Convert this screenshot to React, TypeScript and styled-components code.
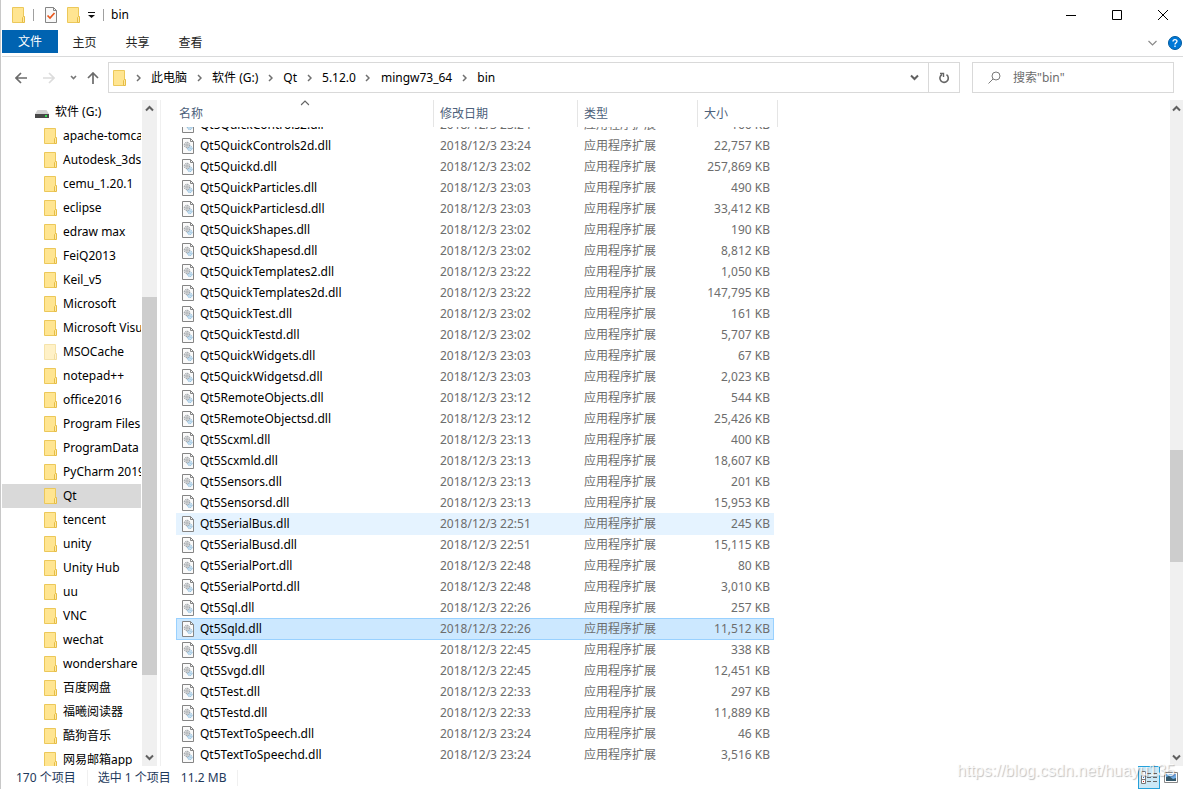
import React from "react";
import styled, { createGlobalStyle } from "styled-components";

const Global = createGlobalStyle`
  * { box-sizing: border-box; }
  html, body { margin: 0; background: #fff; overflow: hidden; }
  body, button, input {
    font-family: "Noto Sans", "Noto Sans CJK SC", sans-serif;
    font-size: 12px;
    line-height: 16px;
  }
  button { border: 0; padding: 0; background: none; color: inherit; display: flex; align-items: center; }
  svg { display: block; flex: none; }
`;

const Window = styled.div`
  position: relative;
  display: flex;
  flex-direction: column;
  height: 100vh;
  padding-left: 1px;
  border-left: 1px solid #c8c8c8;
  color: #000;
`;
const TitleBar = styled.header`
  display: flex;
  align-items: center;
  height: 30px;
  padding-left: 10px;
`;
const QuickAccess = styled.div`
  display: flex;
  align-items: center;
`;
const Divider = styled.span<{ $gap: number }>`
  width: 1px;
  height: 12px;
  margin: 0 ${(p) => p.$gap}px 0 8px;
  background: #a0a0a0;
`;
const QuickButton = styled.button<{ $gap: number }>`
  margin-right: ${(p) => p.$gap}px;
`;
const WindowControls = styled.div`
  display: flex;
  gap: 36px;
  margin-left: auto;
  padding-right: 15px;
`;
const ControlButton = styled.button`
  justify-content: center;
  width: 10px;
  height: 28px;
`;
const Ribbon = styled.nav`
  display: flex;
  align-items: center;
  height: 27px;
  padding-bottom: 3px;
  border-bottom: 1px solid #d9dadb;
`;
const Tab = styled.button<{ $primary?: boolean }>`
  justify-content: center;
  width: ${(p) => (p.$primary ? 56 : 53)}px;
  height: 23px;
  padding-top: ${(p) => (p.$primary ? 0 : 2)}px;
  color: ${(p) => (p.$primary ? "#fff" : "#222")};
  background: ${(p) => (p.$primary ? "#0063b1" : "transparent")};
`;
const RibbonEnd = styled.div`
  display: flex;
  align-items: center;
  gap: 11px;
  margin-left: auto;
  padding: 2px 1px 0 0;
`;
const AddressRow = styled.div`
  display: flex;
  align-items: center;
  height: 43px;
  padding: 0 9px 2px 12px;
`;
const NavButtons = styled.div`
  display: flex;
  align-items: center;
  width: 94px;
`;
const NavButton = styled.button<{ $w: number }>`
  justify-content: center;
  width: ${(p) => p.$w}px;
  height: 24px;
`;
const AddressBox = styled.div`
  display: flex;
  flex: 1;
  align-items: center;
  height: 31px;
  margin-right: 12px;
  padding-left: 4px;
  border: 1px solid #d9d9d9;
`;
const Crumbs = styled.ol`
  display: flex;
  flex: 1;
  align-items: center;
  margin: 0;
  padding: 0;
  list-style: none;
`;
const Crumb = styled.li`
  display: flex;
  align-items: center;
`;
const CrumbSep = styled.span`
  display: flex;
  justify-content: center;
  width: 25px;
  padding-right: 1px;
`;
const CrumbLink = styled.a`
  color: #000;
  text-decoration: none;
`;
const BoxButton = styled.button<{ $divided?: boolean }>`
  justify-content: center;
  width: ${(p) => (p.$divided ? 31 : 28)}px;
  height: 29px;
  border-left: ${(p) => (p.$divided ? "1px solid #d9d9d9" : "0")};
`;
const SearchBox = styled.label`
  display: flex;
  align-items: center;
  gap: 12px;
  width: 202px;
  height: 31px;
  padding-left: 15px;
  border: 1px solid #d9d9d9;
`;
const SearchInput = styled.input`
  flex: 1;
  min-width: 0;
  padding: 0;
  border: 0;
  outline: 0;
  &::placeholder { color: #6d6d6d; opacity: 1; }
`;
const Body = styled.div`
  display: flex;
  flex: 1;
  min-height: 0;
`;
const TreePane = styled.aside`
  display: flex;
  width: 159px;
  border-right: 1px solid #f0f0f0;
`;
const Tree = styled.ul`
  width: 139px;
  margin: 0 1px 0 0;
  padding: 0;
  overflow: hidden;
  list-style: none;
`;
const TreeItem = styled.li<{ $root?: boolean; $selected?: boolean }>`
  display: flex;
  align-items: center;
  gap: 6px;
  height: 24px;
  padding-left: ${(p) => (p.$root ? 33 : 42)}px;
  white-space: nowrap;
  background: ${(p) => (p.$selected ? "#d9d9d9" : "transparent")};
`;
const Scroll = styled.div<{ $w: number }>`
  display: flex;
  flex: none;
  flex-direction: column;
  width: ${(p) => p.$w}px;
  background: #f0f0f0;
`;
const ScrollButton = styled.button`
  justify-content: center;
  height: 17px;
`;
const Track = styled.div<{ $size: number }>`
  flex: ${(p) => p.$size} 1 0;
`;
const Thumb = styled.div<{ $size: number }>`
  flex: ${(p) => p.$size} 1 0;
  background: #cdcdcd;
`;
const Main = styled.main`
  display: flex;
  flex: 1;
  min-width: 0;
`;
const Table = styled.table`
  display: flex;
  flex: 1;
  flex-direction: column;
  min-width: 0;
  padding-left: 15px;
`;
const Head = styled.thead`
  display: block;
  flex: none;
`;
const HeadRow = styled.tr`
  display: grid;
  grid-template-columns: 258px 144px 120px 80px;
`;
const HeadCell = styled.th<{ $first?: boolean }>`
  position: relative;
  height: 27px;
  padding: 6px 0 0 ${(p) => (p.$first ? 3 : 6)}px;
  border-right: 1px solid #e5e5e5;
  color: #4c607a;
  font-weight: 400;
  text-align: left;
`;
const SortMark = styled.span`
  position: absolute;
  top: 0;
  left: 50%;
  transform: translateX(-50%);
`;
const Rows = styled.tbody`
  display: flex;
  flex: 1;
  flex-direction: column;
  justify-content: flex-end;
  min-height: 0;
  overflow: hidden;
`;
const Row = styled.tr<{ $state?: string }>`
  display: grid;
  flex: none;
  grid-template-columns: 258px 144px 100px 88px;
  align-items: center;
  width: 598px;
  height: 22px;
  padding-left: 5px;
  border: 1px solid ${(p) => (p.$state === "selected" ? "#99d1ff" : "transparent")};
  background: ${(p) => (p.$state === "selected" ? "#cce8ff" : "transparent")};
  ${(p) => (p.$state === "hover" ? "background: #e5f3ff; border-color: #e5f3ff;" : "")}
  & + & { margin-top: -1px; }
`;
const Cell = styled.td<{ $right?: boolean }>`
  padding: 0 ${(p) => (p.$right ? 2 : 0)}px 0 0;
  color: #6d6d6d;
  text-align: ${(p) => (p.$right ? "right" : "left")};
  white-space: nowrap;
`;
const NameCell = styled(Cell)`
  display: flex;
  align-items: center;
  gap: 6px;
  color: #000;
`;
const StatusBar = styled.footer`
  display: flex;
  align-items: center;
  height: 23px;
  padding: 0 3px 0 14px;
  color: #1e395b;
`;
const StatusText = styled.span<{ $divided?: boolean }>`
  margin-right: 10px;
  padding-right: ${(p) => (p.$divided ? 11 : 0)}px;
  border-right: ${(p) => (p.$divided ? "1px solid #f0f0f0" : "0")};
`;
const Views = styled.div`
  display: flex;
  gap: 2px;
  margin-left: auto;
`;
const ViewButton = styled.button<{ $active?: boolean }>`
  justify-content: center;
  width: ${(p) => (p.$active ? 22 : 18)}px;
  height: 23px;
  border: ${(p) => (p.$active ? "1px solid #26a0da" : "0")};
  background: ${(p) => (p.$active ? "#cbe8f6" : "transparent")};
`;
const Watermark = styled.span`
  position: absolute;
  right: 8px;
  bottom: 9px;
  color: rgba(255, 255, 255, 0.8);
  font: 16px/18px "Liberation Sans", sans-serif;
  text-shadow: 1px 1px 1px rgba(0, 0, 0, 0.25);
  pointer-events: none;
`;

const Folder = ({ faded }: { faded?: boolean }) => (
  <svg width="13" height="16" viewBox="0 0 13 16" opacity={faded ? 0.5 : 1}>
    <path d="M.5 .5H11.5V15.5H.5Z" fill="#ffe591" stroke="#ecc85a" />
    <path d="M10.5 10.5L11.5 9.500H12.500V15.500H10.500Z" fill="#ffe9a6" stroke="#e6bd45" />
  </svg>
);
const Drive = () => (
  <svg width="14" height="14" viewBox="0 0 14 14">
    <path d="M2.500 5H11.500L14 9H0Z" fill="#d2d2d2" />
    <path d="M0 9H14V13H0Z" fill="#484848" />
    <path d="M10 10H12V12H10Z" fill="#35e052" />
  </svg>
);
const DllFile = () => (
  <svg width="12" height="16" viewBox="0 0 12 16">
    <path d="M.5 .5H8.500L11.500 3.500V15.500H.5Z" fill="#fafafa" stroke="#858585" />
    <path d="M8.500 .5V3.500H11.500" fill="none" stroke="#858585" />
    <circle cx="7.800" cy="10.300" r="2.300" fill="#d6ebf8" stroke="#7fb0d4" strokeDasharray="1.200 .6" />
    <circle cx="5" cy="7" r="2.700" fill="#f2f2f2" stroke="#858b91" strokeDasharray="1.400 .6" />
    <circle cx="5" cy="7" r="1.200" fill="#fff" stroke="#858b91" strokeWidth=".8" />
    <circle cx="7.800" cy="10.300" r=".8" fill="#fff" stroke="#7fb0d4" strokeWidth=".6" />
  </svg>
);
const PropertiesIcon = () => (
  <svg width="12" height="16" viewBox="0 0 12 16">
    <path d="M.5 .5H8.500L11.500 3.500V15.500H.5Z" fill="#f8f8f8" stroke="#858585" />
    <path d="M8.500 .5V3.500H11.500" fill="none" stroke="#858585" />
    <path d="M2.500 8.500L5 11L9.500 6" fill="none" stroke="#e8561c" strokeWidth="1.700" />
  </svg>
);
const dirs = { down: "M1 1.500L4.500 5L8 1.500", up: "M1 5.500L4.500 2L8 5.500" };
const Chevron = ({ dir }: { dir: "up" | "down" }) => (
  <svg width="9" height="7" viewBox="0 0 9 7">
    <path d={dirs[dir]} fill="none" stroke="#606060" strokeWidth="2" />
  </svg>
);
const ThinChevron = ({ dir, color }: { dir: "up" | "down"; color: string }) => (
  <svg width="9" height="6" viewBox="0 0 9 6">
    <path d={dir === "up" ? "M.5 5L4.500 1L8.500 5" : "M.5 1L4.500 5L8.500 1"} fill="none" stroke={color} strokeWidth="1.200" />
  </svg>
);
const Arrow = ({ rotate = 0, color = "#6b6b6b" }: { rotate?: number; color?: string }) => (
  <svg width="12" height="12" viewBox="0 0 12 12">
    <path d="M12 6H1M6 1L1 6L6 11" fill="none" stroke={color} strokeWidth="1.700" transform={`rotate(${rotate} 6 6)`} />
  </svg>
);

const folders = [
  "apache-tomcat", "Autodesk_3ds", "cemu_1.20.1", "eclipse", "edraw max", "FeiQ2013", "Keil_v5", "Microsoft",
  "Microsoft Visual", "MSOCache", "notepad++", "office2016", "Program Files", "ProgramData", "PyCharm 2019", "Qt",
  "tencent", "unity", "Unity Hub", "uu", "VNC", "wechat", "wondershare", "百度网盘", "福曦阅读器", "酷狗音乐", "网易邮箱app",
];
const files: [string, string, string][] = [
  ["QuickControls2", "23:24", "166"],
  ["QuickControls2d", "23:24", "22,757"],
  ["Quickd", "23:02", "257,869"],
  ["QuickParticles", "23:03", "490"],
  ["QuickParticlesd", "23:03", "33,412"],
  ["QuickShapes", "23:02", "190"],
  ["QuickShapesd", "23:02", "8,812"],
  ["QuickTemplates2", "23:22", "1,050"],
  ["QuickTemplates2d", "23:22", "147,795"],
  ["QuickTest", "23:02", "161"],
  ["QuickTestd", "23:02", "5,707"],
  ["QuickWidgets", "23:03", "67"],
  ["QuickWidgetsd", "23:03", "2,023"],
  ["RemoteObjects", "23:12", "544"],
  ["RemoteObjectsd", "23:12", "25,426"],
  ["Scxml", "23:13", "400"],
  ["Scxmld", "23:13", "18,607"],
  ["Sensors", "23:13", "201"],
  ["Sensorsd", "23:13", "15,953"],
  ["SerialBus", "22:51", "245"],
  ["SerialBusd", "22:51", "15,115"],
  ["SerialPort", "22:48", "80"],
  ["SerialPortd", "22:48", "3,010"],
  ["Sql", "22:26", "257"],
  ["Sqld", "22:26", "11,512"],
  ["Svg", "22:45", "338"],
  ["Svgd", "22:45", "12,451"],
  ["Test", "22:33", "297"],
  ["Testd", "22:33", "11,889"],
  ["TextToSpeech", "23:24", "46"],
  ["TextToSpeechd", "23:24", "3,516"],
];
const rowState: Record<string, string> = { SerialBus: "hover", Sqld: "selected" };
const path = ["此电脑", "软件 (G:)", "Qt", "5.12.0", "mingw73_64", "bin"];

const ScrollBar = ({ w, parts }: { w: number; parts: [number, number, number] }) => (
  <Scroll $w={w}>
    <ScrollButton aria-label="向上滚动"><Chevron dir="up" /></ScrollButton>
    <Track $size={parts[0]} />
    <Thumb $size={parts[1]} />
    <Track $size={parts[2]} />
    <ScrollButton aria-label="向下滚动"><Chevron dir="down" /></ScrollButton>
  </Scroll>
);

export default function App() {
  return (
    <Window>
      <Global />
      <TitleBar>
        <QuickAccess>
          <Folder />
          <Divider $gap={11} />
          <QuickButton $gap={10} aria-label="属性"><PropertiesIcon /></QuickButton>
          <QuickButton $gap={8} aria-label="新建文件夹"><Folder /></QuickButton>
          <QuickButton $gap={0} aria-label="自定义快速访问工具栏">
            <svg width="7" height="6" viewBox="0 0 7 6"><path d="M0 0H7V1H0ZM0 3H7L3.500 6Z" fill="#111" /></svg>
          </QuickButton>
          <Divider $gap={7} />
          <span>bin</span>
        </QuickAccess>
        <WindowControls>
          <ControlButton aria-label="最小化">
            <svg width="10" height="10" viewBox="0 0 10 10"><path d="M0 5.500H10" stroke="#000" /></svg>
          </ControlButton>
          <ControlButton aria-label="最大化">
            <svg width="10" height="10" viewBox="0 0 10 10"><path d="M.5 .5H9.500V9.500H.5Z" fill="none" stroke="#000" /></svg>
          </ControlButton>
          <ControlButton aria-label="关闭">
            <svg width="10" height="10" viewBox="0 0 10 10"><path d="M0 0L10 10M10 0L0 10" stroke="#000" /></svg>
          </ControlButton>
        </WindowControls>
      </TitleBar>
      <Ribbon>
        <Tab $primary>文件</Tab>
        <Tab>主页</Tab>
        <Tab>共享</Tab>
        <Tab>查看</Tab>
        <RibbonEnd>
          <button aria-label="展开功能区"><ThinChevron dir="down" color="#8a8a8a" /></button>
          <button aria-label="帮助">
            <svg width="14" height="14" viewBox="0 0 14 14">
              <circle cx="7" cy="7" r="6.500" fill="#0078d7" stroke="#005a9e" />
              <path d="M5 5.500C5 3 9 3 9 5.300C9 6.700 7 6.800 7 8.500M7 9.500V11" fill="none" stroke="#fff" strokeWidth="1.300" />
            </svg>
          </button>
        </RibbonEnd>
      </Ribbon>
      <AddressRow>
        <NavButtons>
          <NavButton $w={15} aria-label="后退"><Arrow /></NavButton>
          <NavButton $w={44} aria-label="前进"><Arrow rotate={180} color="#dcdcdc" /></NavButton>
          <NavButton $w={8} aria-label="最近的位置">
            <svg width="7" height="5" viewBox="0 0 7 5"><path d="M1 1L3.500 3.500L6 1" fill="none" stroke="#777" strokeWidth="1.600" /></svg>
          </NavButton>
          <NavButton $w={32} aria-label="上移"><Arrow rotate={90} /></NavButton>
        </NavButtons>
        <AddressBox>
          <Folder />
          <Crumbs>
            {path.map((p) => (
              <Crumb key={p}>
                <CrumbSep>
                  <svg width="5" height="8" viewBox="0 0 5 8"><path d="M1 1L4 4L1 7" fill="none" stroke="#707070" strokeWidth="1.500" /></svg>
                </CrumbSep>
                <CrumbLink href="#">{p}</CrumbLink>
              </Crumb>
            ))}
          </Crumbs>
          <BoxButton aria-label="以前的位置"><Chevron dir="down" /></BoxButton>
          <BoxButton $divided aria-label="刷新">
            <svg width="12" height="12" viewBox="0 0 12 12">
              <path d="M4 2.500A4.200 4.200 0 1 0 8.500 2.700" fill="none" stroke="#666" strokeWidth="1.600" />
              <path d="M2 1.500H5.500V5" fill="none" stroke="#666" strokeWidth="1.400" />
            </svg>
          </BoxButton>
        </AddressBox>
        <SearchBox>
          <svg width="13" height="13" viewBox="0 0 13 13">
            <circle cx="8" cy="5" r="4" fill="none" stroke="#7a7a7a" />
            <path d="M5 8L.5 12.500" stroke="#7a7a7a" />
          </svg>
          <SearchInput aria-label="搜索" placeholder={'搜索"bin"'} />
        </SearchBox>
      </AddressRow>
      <Body>
        <TreePane>
          <Tree>
            <TreeItem $root><Drive />软件 (G:)</TreeItem>
            {folders.map((f) => (
              <TreeItem key={f} $selected={f === "Qt"}><Folder faded={f === "MSOCache"} />{f}</TreeItem>
            ))}
          </Tree>
          <ScrollBar w={15} parts={[180, 378, 74]} />
        </TreePane>
        <Main>
          <Table>
            <Head>
              <HeadRow>
                <HeadCell $first>名称<SortMark><ThinChevron dir="up" color="#666" /></SortMark></HeadCell>
                <HeadCell>修改日期</HeadCell>
                <HeadCell>类型</HeadCell>
                <HeadCell>大小</HeadCell>
              </HeadRow>
            </Head>
            <Rows>
              {files.map(([name, time, size]) => (
                <Row key={name} $state={rowState[name]}>
                  <NameCell><DllFile />Qt5{name}.dll</NameCell>
                  <Cell>2018/12/3 {time}</Cell>
                  <Cell>应用程序扩展</Cell>
                  <Cell $right>{size} KB</Cell>
                </Row>
              ))}
            </Rows>
          </Table>
          <ScrollBar w={13} parts={[333, 112, 187]} />
        </Main>
      </Body>
      <StatusBar>
        <StatusText $divided>170 个项目</StatusText>
        <StatusText>选中 1 个项目</StatusText>
        <StatusText $divided>11.2 MB</StatusText>
        <Views>
          <ViewButton $active aria-label="详细信息">
            <svg width="16" height="13" viewBox="0 0 16 13">
              <path d="M.5 .5H4.500V12.500H.5ZM.5 4.500H4.500M.5 8.500H4.500" fill="#fff" stroke="#777" />
              <path d="M6 2.500H10M12 2.500H16M6 6.500H10M12 6.500H16M6 10.500H10M12 10.500H16" stroke="#666" />
              <path d="M2 6H3V7H2Z" fill="#2874d0" /><path d="M2 10H3V11H2Z" fill="#d02020" />
            </svg>
          </ViewButton>
          <ViewButton aria-label="大缩略图">
            <svg width="14" height="11" viewBox="0 0 14 11">
              <path d="M.5 .5H13.500V10.500H.5Z" fill="#fff" stroke="#888" />
              <path d="M2 2H12V9H2Z" fill="#73aee8" /><path d="M2 5L5 4L9 7L12 6V9H2Z" fill="#34586a" />
            </svg>
          </ViewButton>
        </Views>
      </StatusBar>
      <Watermark>https://blog.csdn.net/huayu135</Watermark>
    </Window>
  );
}
